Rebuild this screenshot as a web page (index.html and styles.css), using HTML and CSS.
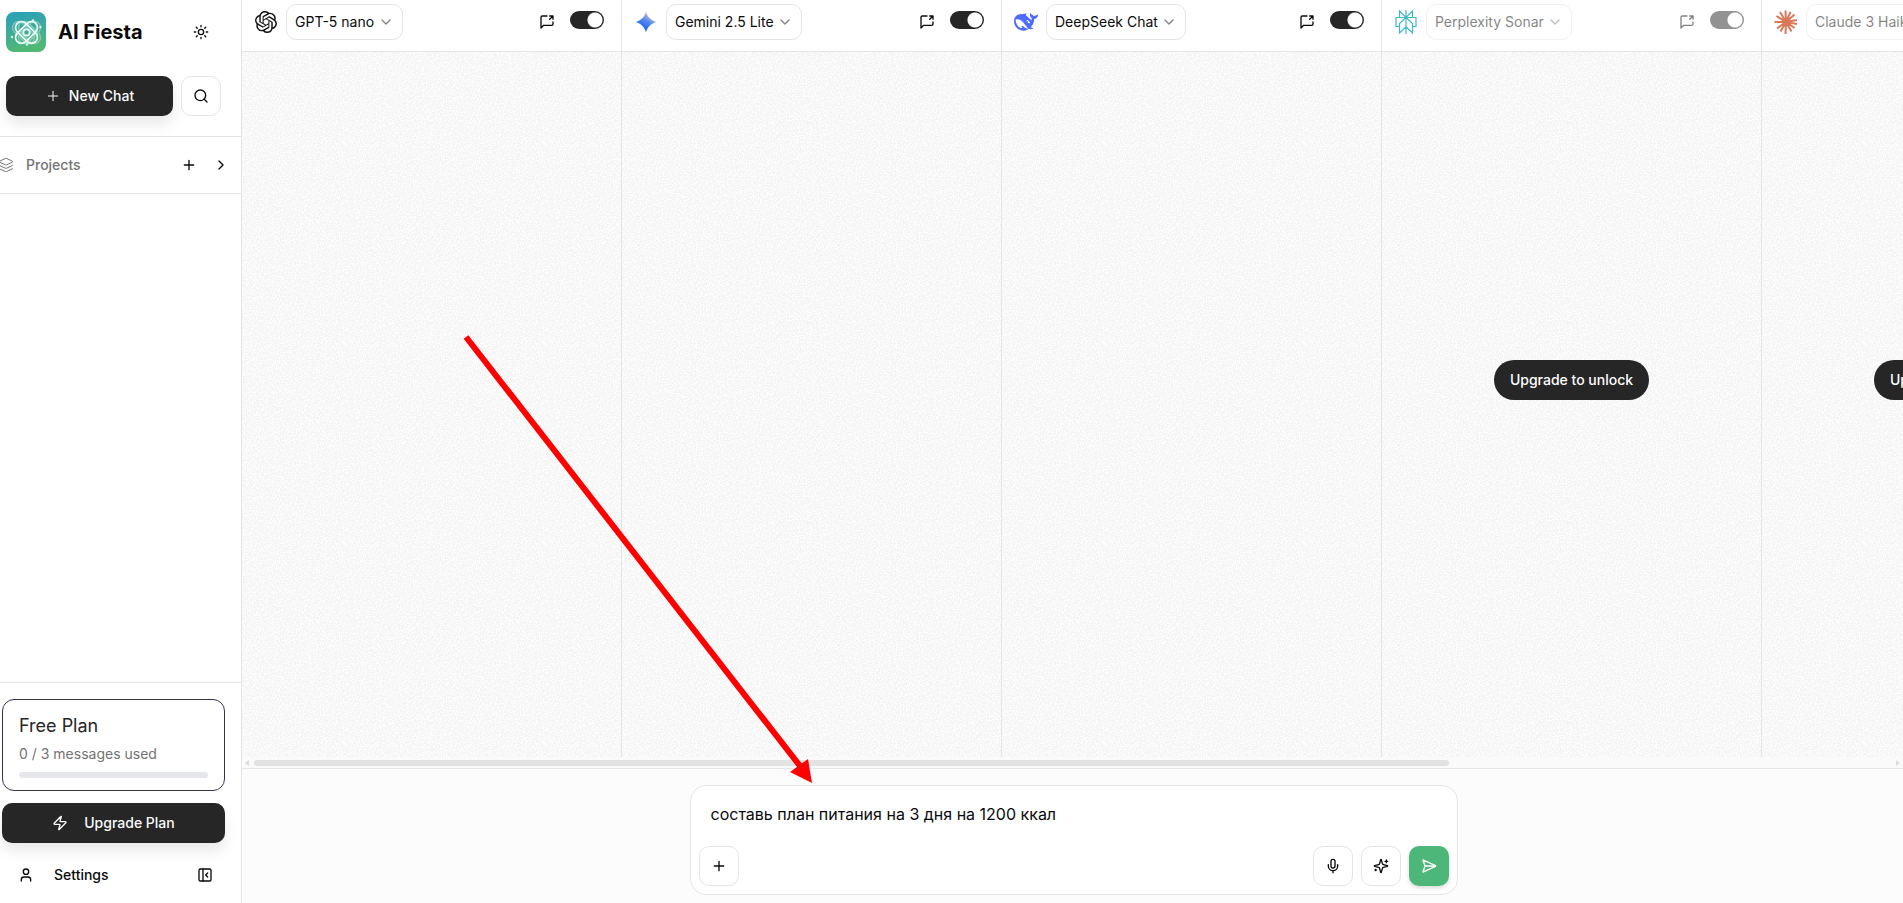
FILE: index.html
```html
<!DOCTYPE html>
<html lang="en">
<head>
  <meta charset="UTF-8" />
  <meta name="viewport" content="width=device-width, initial-scale=1.0" />
  <title>AI Fiesta</title>
  <link rel="stylesheet" href="styles.css">
</head>
<body>

  <!-- shared icons -->
  <svg class="sprite" aria-hidden="true">
    <symbol id="plus" viewBox="0 0 24 24"><path d="M5 12h14M12 5v14"/></symbol>
    <symbol id="chevron-down" viewBox="0 0 24 24"><path d="m6 9 6 6 6-6"/></symbol>
    <symbol id="share" viewBox="0 0 24 24"><path d="M21 12v3a2 2 0 0 1-2 2H7l-4 4V5a2 2 0 0 1 2-2h7M16 3h5v5M16 8l5-5"/></symbol>
  </svg>

  <aside class="sidebar">
    <div class="sidebar-top">
      <div class="brand-row">
        <svg class="logo" viewBox="0 0 40 40" aria-hidden="true">
          <defs>
            <linearGradient id="logoFill" x1="0" y1="0" x2="0.2" y2="1">
              <stop offset="0" stop-color="#2a9fbd"/>
              <stop offset="1" stop-color="#50b874"/>
            </linearGradient>
          </defs>
          <rect width="40" height="40" rx="8" fill="url(#logoFill)"/>
          <g fill="none" stroke="#fff" stroke-width="1.5" opacity="0.35">
            <rect x="10.500" y="14.500" width="26" height="12" rx="6" transform="rotate(45 23.5 20.5)"/>
            <rect x="4.500" y="14.500" width="26" height="12" rx="6" transform="rotate(45 17.5 20.5)"/>
            <rect x="10.500" y="14.500" width="26" height="12" rx="6" transform="rotate(-45 23.5 20.5)"/>
          </g>
          <g fill="none" stroke="#e9fbf5" stroke-width="1.8">
            <rect x="7.500" y="14.500" width="26" height="12" rx="6" transform="rotate(45 20.5 20.5)"/>
            <rect x="7.500" y="14.500" width="26" height="12" rx="6" transform="rotate(-45 20.5 20.5)"/>
            <circle cx="20.500" cy="20.500" r="3.200"/>
          </g>
          <g fill="#d8f5ec">
            <circle cx="27" cy="8.500" r="1.200"/><circle cx="34.500" cy="15" r="1.200"/>
            <circle cx="6" cy="25" r="1.200"/><circle cx="21" cy="32.500" r="1.200"/>
          </g>
        </svg>
        <h1 class="brand">AI Fiesta</h1>
        <button class="icon-btn" type="button" aria-label="Toggle theme">
          <svg class="icon" viewBox="0 0 24 24"><circle cx="12" cy="12" r="4"/><path d="M12 2v2M12 20v2M4.930 4.930l1.410 1.410M17.660 17.660l1.410 1.410M2 12h2M20 12h2M6.340 17.660l-1.410 1.410M19.070 4.930l-1.410 1.410"/></svg>
        </button>
      </div>
      <div class="action-row">
        <button class="dark-btn new-chat" type="button">
          <svg class="icon thin"><use href="#plus"/></svg>
          New Chat
        </button>
        <button class="icon-btn outlined" type="button" aria-label="Search">
          <svg class="icon" viewBox="0 0 24 24"><circle cx="11" cy="11" r="8"/><path d="m21 21-4.300-4.300"/></svg>
        </button>
      </div>
    </div>

    <div class="projects">
      <svg class="icon thin muted" viewBox="0 0 24 24"><path d="M12.830 2.180a2 2 0 0 0-1.660 0L2.600 6.080a1 1 0 0 0 0 1.830l8.580 3.910a2 2 0 0 0 1.660 0l8.580-3.900a1 1 0 0 0 0-1.830zM2 12a1 1 0 0 0 .58.91l8.600 3.910a2 2 0 0 0 1.650 0l8.580-3.900A1 1 0 0 0 22 12M2 17a1 1 0 0 0 .58.91l8.600 3.910a2 2 0 0 0 1.650 0l8.580-3.900A1 1 0 0 0 22 17"/></svg>
      <span class="projects-label">Projects</span>
      <button class="icon-btn small" type="button" aria-label="Add project"><svg class="icon"><use href="#plus"/></svg></button>
      <button class="icon-btn small" type="button" aria-label="Expand projects">
        <svg class="icon" viewBox="0 0 24 24"><path d="m9 18 6-6-6-6"/></svg>
      </button>
    </div>

    <div class="sidebar-bottom">
      <div class="plan-card">
        <div class="plan-name">Free Plan</div>
        <div class="plan-usage">0 / 3 messages used</div>
        <div class="plan-bar"></div>
      </div>
      <button class="dark-btn upgrade" type="button">
        <svg class="icon" viewBox="0 0 24 24"><path d="M4 14a1 1 0 0 1-.78-1.630l9.900-10.200a.5.5 0 0 1 .86.46l-1.920 6.020A1 1 0 0 0 13 10h7a1 1 0 0 1 .78 1.630l-9.900 10.200a.5.5 0 0 1-.86-.46l1.920-6.020A1 1 0 0 0 11 14z"/></svg>
        Upgrade Plan
      </button>
      <div class="settings-row">
        <button class="settings" type="button">
          <svg class="icon" viewBox="0 0 24 24"><path d="M19 21v-2a4 4 0 0 0-4-4H9a4 4 0 0 0-4 4v2"/><circle cx="12" cy="7" r="4"/></svg>
          Settings
        </button>
        <button class="icon-btn" type="button" aria-label="Collapse sidebar">
          <svg class="icon" viewBox="0 0 24 24"><rect x="3" y="3" width="18" height="18" rx="2"/><path d="M9 3v18M16 15l-3-3 3-3"/></svg>
        </button>
      </div>
    </div>
  </aside>

  <main class="main">
    <div class="columns">
      <section class="column">
        <header class="column-head">
          <svg class="model-logo" viewBox="0 0 24 24" fill="#111"><path d="M22.2819 9.8211a5.9847 5.9847 0 0 0-.5157-4.9108 6.0462 6.0462 0 0 0-6.5098-2.9A6.0651 6.0651 0 0 0 4.9807 4.1818a5.9847 5.9847 0 0 0-3.9977 2.9 6.0462 6.0462 0 0 0 .7427 7.0966 5.98 5.98 0 0 0 .511 4.9107 6.051 6.051 0 0 0 6.5146 2.9001A5.9847 5.9847 0 0 0 13.2599 24a6.0557 6.0557 0 0 0 5.7718-4.2058 5.9894 5.9894 0 0 0 3.9977-2.9001 6.0557 6.0557 0 0 0-.7475-7.0729zm-9.022 12.6081a4.4755 4.4755 0 0 1-2.8764-1.0408l.1419-.0804 4.7783-2.7582a.7948.7948 0 0 0 .3927-.6813v-6.7369l2.02 1.1686a.071.071 0 0 1 .038.052v5.5826a4.504 4.504 0 0 1-4.4945 4.4944zm-9.6607-4.1254a4.4708 4.4708 0 0 1-.5346-3.0137l.142.0852 4.783 2.7582a.7712.7712 0 0 0 .7806 0l5.8428-3.3685v2.3324a.0804.0804 0 0 1-.0332.0615L9.74 19.9502a4.4992 4.4992 0 0 1-6.1408-1.6464zM2.3408 7.8956a4.485 4.485 0 0 1 2.3655-1.9728V11.6a.7664.7664 0 0 0 .3879.6765l5.8144 3.3543-2.0201 1.1685a.0757.0757 0 0 1-.071 0l-4.8303-2.7865A4.504 4.504 0 0 1 2.3408 7.872zm16.5963 3.8558L13.1038 8.364 15.1192 7.2a.0757.0757 0 0 1 .071 0l4.8303 2.7913a4.4944 4.4944 0 0 1-.6765 8.1042v-5.6772a.79.79 0 0 0-.407-.667zm2.0107-3.0231l-.142-.0852-4.7735-2.7818a.7759.7759 0 0 0-.7854 0L9.409 9.2297V6.8974a.0662.0662 0 0 1 .0284-.0615l4.8303-2.7866a4.4992 4.4992 0 0 1 6.6802 4.66zM8.3065 12.863l-2.02-1.1638a.0804.0804 0 0 1-.038-.0567V6.0742a4.4992 4.4992 0 0 1 7.3757-3.4537l-.142.0805L8.704 5.459a.7948.7948 0 0 0-.3927.6813zm1.0976-2.3654l2.602-1.4998 2.6069 1.4998v2.9994l-2.5974 1.4997-2.6067-1.4997Z"/></svg>
          <div class="picker">
            <select aria-label="First model"><option>GPT-5 nano</option></select>
            <svg class="icon"><use href="#chevron-down"/></svg>
          </div>
          <button class="share" type="button" aria-label="Open GPT-5 nano chat"><svg class="icon"><use href="#share"/></svg></button>
          <input class="toggle" type="checkbox" aria-label="Enable GPT-5 nano" checked />
        </header>
        <div class="column-body"></div>
      </section>

      <section class="column">
        <header class="column-head">
          <svg class="model-logo" viewBox="0 0 24 24">
            <defs>
              <linearGradient id="geminiFill" x1="0.3" y1="0.8" x2="0.7" y2="0.1">
                <stop offset="0" stop-color="#1c62f0"/>
                <stop offset="0.5" stop-color="#5488ee"/>
                <stop offset="1" stop-color="#d3c3cf"/>
              </linearGradient>
            </defs>
            <path fill="url(#geminiFill)" d="M12 0.500c1.500 6 5.500 10 11.500 11.500-6 1.500-10 5.500-11.500 11.500-1.500-6-5.500-10-11.500-11.500 6-1.500 10-5.500 11.500-11.500z"/>
          </svg>
          <div class="picker">
            <select aria-label="Second model"><option>Gemini 2.5 Lite</option></select>
            <svg class="icon"><use href="#chevron-down"/></svg>
          </div>
          <button class="share" type="button" aria-label="Open Gemini 2.5 Lite chat"><svg class="icon"><use href="#share"/></svg></button>
          <input class="toggle" type="checkbox" aria-label="Enable Gemini 2.5 Lite" checked />
        </header>
        <div class="column-body"></div>
      </section>

      <section class="column">
        <header class="column-head">
          <svg class="model-logo wide" viewBox="0 0 24 24" fill="#4d6bfe"><path d="M23.748 4.482c-.254-.124-.364.113-.512.234-.051.039-.094.09-.137.136-.372.397-.806.657-1.373.626-.829-.046-1.537.214-2.163.848-.133-.782-.575-1.248-1.247-1.548-.352-.156-.708-.311-.955-.65-.172-.241-.219-.51-.305-.774-.055-.16-.11-.323-.293-.35-.2-.031-.278.136-.356.276-.313.572-.434 1.202-.422 1.84.027 1.436.633 2.58 1.838 3.393.137.093.172.187.129.323-.082.28-.18.552-.266.833-.055.179-.137.217-.329.14a5.526 5.526 0 0 1-1.736-1.18c-.857-.828-1.631-1.742-2.597-2.458a11.365 11.365 0 0 0-.689-.471c-.985-.957.13-1.743.388-1.836.27-.098.093-.432-.779-.428-.872.004-1.67.295-2.687.684a3.055 3.055 0 0 1-.465.137 9.597 9.597 0 0 0-2.883-.102c-1.885.21-3.39 1.102-4.497 2.623C.082 8.606-.231 10.684.152 12.85c.403 2.284 1.569 4.175 3.36 5.653 1.858 1.533 3.997 2.284 6.438 2.14 1.482-.085 3.133-.284 4.994-1.86.47.234.962.327 1.78.397.63.059 1.236-.03 1.705-.128.735-.156.684-.837.419-.961-2.155-1.004-1.682-.595-2.113-.926 1.096-1.296 2.746-2.642 3.392-7.003.05-.347.007-.565 0-.845-.004-.17.035-.237.23-.256a4.173 4.173 0 0 0 1.545-.475c1.396-.763 1.96-2.015 2.093-3.517.02-.23-.004-.467-.247-.588zM11.581 18c-2.089-1.642-3.102-2.183-3.52-2.16-.392.024-.321.471-.235.763.09.288.207.486.371.739.114.167.192.416-.113.603-.673.416-1.842-.14-1.897-.167-1.361-.802-2.5-1.86-3.301-3.307-.774-1.393-1.224-2.887-1.298-4.482-.02-.386.093-.522.477-.592a4.696 4.696 0 0 1 1.529-.039c2.132.312 3.946 1.265 5.468 2.774.868.86 1.525 1.887 2.202 2.891.72 1.066 1.494 2.082 2.48 2.914.348.292.625.514.891.677-.802.09-2.14.11-3.054-.614zm1-6.44a.306.306 0 0 1 .415-.287.302.302 0 0 1 .2.288.306.306 0 0 1-.31.307.303.303 0 0 1-.304-.308zm3.11 1.596c-.2.081-.399.151-.59.16a1.245 1.245 0 0 1-.798-.254c-.274-.23-.47-.358-.552-.758a1.73 1.73 0 0 1 .016-.588c.07-.327-.008-.537-.239-.727-.187-.156-.426-.199-.688-.199a.559.559 0 0 1-.254-.078c-.11-.054-.2-.19-.114-.358.028-.054.16-.186.192-.21.356-.202.767-.136 1.146.016.352.144.618.408 1.001.782.391.451.462.576.685.914.176.265.336.537.445.848.067.195-.019.354-.25.452z"/></svg>
          <div class="picker">
            <select aria-label="Third model"><option>DeepSeek Chat</option></select>
            <svg class="icon"><use href="#chevron-down"/></svg>
          </div>
          <button class="share" type="button" aria-label="Open DeepSeek Chat"><svg class="icon"><use href="#share"/></svg></button>
          <input class="toggle" type="checkbox" aria-label="Enable DeepSeek Chat" checked />
        </header>
        <div class="column-body"></div>
      </section>

      <section class="column locked">
        <header class="column-head">
          <svg class="model-logo wide" viewBox="0 0 24 24" fill="none" stroke="#3fb8c9" stroke-width="1.2"><path d="M12 0v24M5.500 7.500V1L12 7.500 18.500 1v6.500M5.500 16.500H2v-9h20v9h-3.500M12 7.500l-6.500 6V23l6.500-6M12 7.500l6.500 6V23L12 17"/></svg>
          <div class="picker">
            <select aria-label="Fourth model"><option>Perplexity Sonar</option></select>
            <svg class="icon"><use href="#chevron-down"/></svg>
          </div>
          <button class="share" type="button" aria-label="Open Perplexity Sonar chat"><svg class="icon"><use href="#share"/></svg></button>
          <input class="toggle" type="checkbox" aria-label="Enable Perplexity Sonar" checked />
        </header>
        <div class="column-body">
          <button class="unlock" type="button">Upgrade to unlock</button>
        </div>
      </section>

      <section class="column locked">
        <header class="column-head">
          <svg class="model-logo wide" viewBox="0 0 24 24" fill="none" stroke="#d97757" stroke-width="2"><path d="M12 12 11.500.5M12 12l4.500-10M12 12l8.500-7.500M12 12l11-2M12 12l11 2M12 12l8.500 6M12 12l5.500 9.500M12 12l-.5 12M12 12l-5.500 9.500M12 12l-9 6.500M12 12H.5M12 12 2.500 6M12 12 6 2"/></svg>
          <div class="picker">
            <select aria-label="Fifth model"><option>Claude 3 Haiku</option></select>
            <svg class="icon"><use href="#chevron-down"/></svg>
          </div>
          <button class="share" type="button" aria-label="Open Claude 3 Haiku chat"><svg class="icon"><use href="#share"/></svg></button>
          <input class="toggle" type="checkbox" aria-label="Enable Claude 3 Haiku" checked />
        </header>
        <div class="column-body">
          <button class="unlock" type="button">Upgrade to unlock</button>
        </div>
      </section>
    </div>

    <div class="scrollbar">
      <svg class="scroll-arrow" viewBox="0 0 6 6"><path d="M5 0v6L1 3z"/></svg>
      <div class="scroll-track"><div class="scroll-thumb"></div></div>
      <svg class="scroll-arrow" viewBox="0 0 6 6"><path d="M1 0v6l4-3z"/></svg>
    </div>

    <div class="composer-area">
      <form class="composer">
        <textarea rows="1" aria-label="Message" spellcheck="false">составь план питания на 3 дня на 1200 ккал</textarea>
        <div class="composer-tools">
          <button class="icon-btn outlined" type="button" aria-label="Attach"><svg class="icon"><use href="#plus"/></svg></button>
          <span class="spacer"></span>
          <button class="icon-btn outlined" type="button" aria-label="Voice input">
            <svg class="icon" viewBox="0 0 24 24"><path d="M12 2a3 3 0 0 0-3 3v7a3 3 0 0 0 6 0V5a3 3 0 0 0-3-3ZM19 10v2a7 7 0 0 1-14 0v-2M12 19v3"/></svg>
          </button>
          <button class="icon-btn outlined" type="button" aria-label="Improve prompt">
            <svg class="icon" viewBox="0 0 24 24"><path d="M9.937 15.500A2 2 0 0 0 8.500 14.063l-6.135-1.582a.5.5 0 0 1 0-.962L8.500 9.936A2 2 0 0 0 9.937 8.500l1.582-6.135a.5.5 0 0 1 .963 0L14.063 8.500A2 2 0 0 0 15.500 9.937l6.135 1.581a.5.5 0 0 1 0 .964L15.500 14.063a2 2 0 0 0-1.437 1.437l-1.582 6.135a.5.5 0 0 1-.963 0zM20 3v4M22 5h-4M4 17v2M5 18H3"/></svg>
          </button>
          <button class="icon-btn send" type="submit" aria-label="Send">
            <svg class="icon" viewBox="0 0 24 24"><path d="M3.714 3.048a.498.498 0 0 0-.683.627l2.843 7.627a2 2 0 0 1 0 1.396l-2.842 7.627a.498.498 0 0 0 .682.627l18-8.500a.5.5 0 0 0 0-.904zM6 12h16"/></svg>
          </button>
        </div>
      </form>
    </div>

    <!-- pointer to the message box -->
    <svg class="pointer" viewBox="0 0 352 450" aria-hidden="true">
      <path d="M3 1 337 430" fill="none" stroke="#fe0000" stroke-width="6"/>
      <path d="M349 447 327 436 345 423z" fill="#fe0000"/>
    </svg>
  </main>

</body>
</html>
```
FILE: styles.css
```css
* {
  box-sizing: border-box;
}

body {
  margin: 0;
  height: 100vh;
  display: flex;
  overflow: hidden;
  font-family: Inter, "Liberation Sans", sans-serif;
  font-size: 14px;
  line-height: 20px;
  color: #0a0a0a;
  background: #fff;
}

button, select, textarea {
  font: inherit;
  color: inherit;
}

button {
  display: flex;
  align-items: center;
  justify-content: center;
  padding: 0;
  border: none;
  background: none;
  cursor: pointer;
}

.sprite {
  display: none;
}

.icon {
  width: 16px;
  height: 16px;
  flex: none;
  fill: none;
  stroke: currentColor;
  stroke-width: 2;
  stroke-linecap: round;
  stroke-linejoin: round;
}

.thin {
  stroke-width: 1.5;
}

.muted {
  color: #737373;
}

/* buttons */
.icon-btn {
  width: 40px;
  height: 40px;
  flex: none;
  border-radius: 10px;
}

.icon-btn.small {
  width: 32px;
  height: 32px;
}

.icon-btn.outlined {
  background: #fff;
  border: 1px solid #e5e5e5;
}

.dark-btn {
  height: 40px;
  border-radius: 10px;
  background: #262626;
  color: #fafafa;
  font-weight: 500;
  box-shadow: 0 8px 14px rgba(0, 0, 0, 0.09);
}

/* sidebar */
.sidebar {
  flex: none;
  width: 242px;
  display: flex;
  flex-direction: column;
  border-right: 1px solid #e5e5e5;
}

.sidebar-top {
  padding: 12px 20px 20px 6px;
  border-bottom: 1px solid #e5e5e5;
}

.brand-row {
  display: flex;
  align-items: center;
  margin-bottom: 24px;
}

.logo {
  width: 40px;
  height: 40px;
}

.brand {
  flex: 1;
  margin: 0 0 0 12px;
  font-size: 20px;
  line-height: 28px;
  font-weight: 700;
}

.action-row {
  display: flex;
  gap: 8px;
}

.new-chat {
  flex: 1;
  gap: 8px;
}

.projects {
  display: flex;
  align-items: center;
  height: 57px;
  margin-left: -2px;
  padding-right: 4px;
  border-bottom: 1px solid #e5e5e5;
}

.projects-label {
  flex: 1;
  margin-left: 12px;
  color: #737373;
  font-weight: 500;
}

.sidebar-bottom {
  display: flex;
  flex-direction: column;
  gap: 12px;
  margin-top: auto;
  padding: 16px 16px 8px 2px;
  border-top: 1px solid #e5e5e5;
}

.plan-card {
  padding: 12px 16px;
  border: 1px solid #34344a;
  border-radius: 12px;
}

.plan-name {
  font-size: 18px;
  line-height: 28px;
  color: #262626;
}

.plan-usage {
  margin: 4px 0 8px;
  color: #737373;
}

.plan-bar {
  height: 6px;
  border-radius: 3px;
  background: #e5e7eb;
}

.upgrade {
  gap: 16px;
}

.settings-row {
  display: flex;
  justify-content: space-between;
}

.settings {
  gap: 20px;
  padding-left: 16px;
  font-weight: 500;
}

/* model columns */
.main {
  flex: 1;
  min-width: 0;
  display: flex;
  flex-direction: column;
  position: relative;
}

.columns {
  flex: 1;
  min-height: 0;
  display: flex;
  overflow: hidden;
}

.column {
  flex: 0 0 380px;
  display: flex;
  flex-direction: column;
  border-right: 1px solid #e5e5e5;
}

.column-head {
  display: flex;
  align-items: center;
  height: 52px;
  padding: 0 17px 8px 12px;
  border-bottom: 1px solid #e5e5e5;
}

.model-logo {
  width: 24px;
  height: 24px;
  padding: 1px;
  overflow: visible;
}

.model-logo.wide {
  padding: 0;
}

.picker {
  display: flex;
  align-items: center;
  gap: 3px;
  height: 36px;
  margin: 0 auto 0 8px;
  padding: 0 8px;
  border: 1px solid #e5e5e5;
  border-radius: 10px;
}

.picker select {
  appearance: none;
  padding: 0;
  border: none;
  background: none;
}

.picker .icon {
  opacity: 0.5;
}

.toggle {
  appearance: none;
  width: 34px;
  height: 18px;
  margin: 0 0 4px 15px;
  border-radius: 9px;
  background: radial-gradient(circle at 25px 9px, #fff 7px, #262626 8px);
}

.locked .picker,
.locked .share,
.locked .toggle {
  opacity: 0.5;
}

.column-body {
  flex: 1;
  display: flex;
  align-items: center;
  justify-content: center;
  padding-bottom: 50px;
  background: #f3f3f3 url("data:image/svg+xml,%3Csvg xmlns='http://www.w3.org/2000/svg' width='200' height='200'%3E%3Cfilter id='n' x='0' y='0' width='1' height='1'%3E%3CfeTurbulence type='fractalNoise' baseFrequency='0.7' numOctaves='3' stitchTiles='stitch'/%3E%3CfeColorMatrix values='0 0 0 0 1 0 0 0 0 1 0 0 0 0 1 0 0 0 3 -1.1'/%3E%3C/filter%3E%3Crect width='200' height='200' filter='url(%23n)'/%3E%3C/svg%3E");
}

.unlock {
  height: 40px;
  padding: 0 16px;
  border-radius: 20px;
  background: #262626;
  color: #fff;
  font-weight: 500;
}

/* horizontal scrollbar */
.scrollbar {
  display: flex;
  align-items: center;
  gap: 4px;
  height: 11px;
  padding: 0 2px;
  background: #fafafa;
}

.scroll-arrow {
  width: 6px;
  height: 6px;
  fill: #dcdcdc;
}

.scroll-track {
  flex: 1;
}

.scroll-thumb {
  width: 73%;
  height: 6px;
  border-radius: 3px;
  background: #e2e2e2;
}

/* message box */
.composer-area {
  padding: 16px 16px 8px 18px;
  border-top: 1px solid #e5e5e5;
  background: #fcfcfc;
}

.composer {
  max-width: 768px;
  margin: 0 auto;
  padding: 8px;
  border: 1px solid #e5e5e5;
  border-radius: 16px;
  background: #fff;
}

.composer textarea {
  display: block;
  width: 100%;
  height: 52px;
  padding: 8px 12px;
  border: none;
  outline: none;
  resize: none;
  background: none;
  font-size: 16px;
  line-height: 24px;
}

.composer-tools {
  display: flex;
  gap: 8px;
}

.spacer {
  flex: 1;
}

.send {
  background: #4db679;
  color: #fff;
  box-shadow: 0 2px 4px rgba(0, 0, 0, 0.15);
}

.pointer {
  position: absolute;
  left: 221px;
  top: 336px;
  width: 352px;
  height: 450px;
  overflow: visible;
  pointer-events: none;
}
```
